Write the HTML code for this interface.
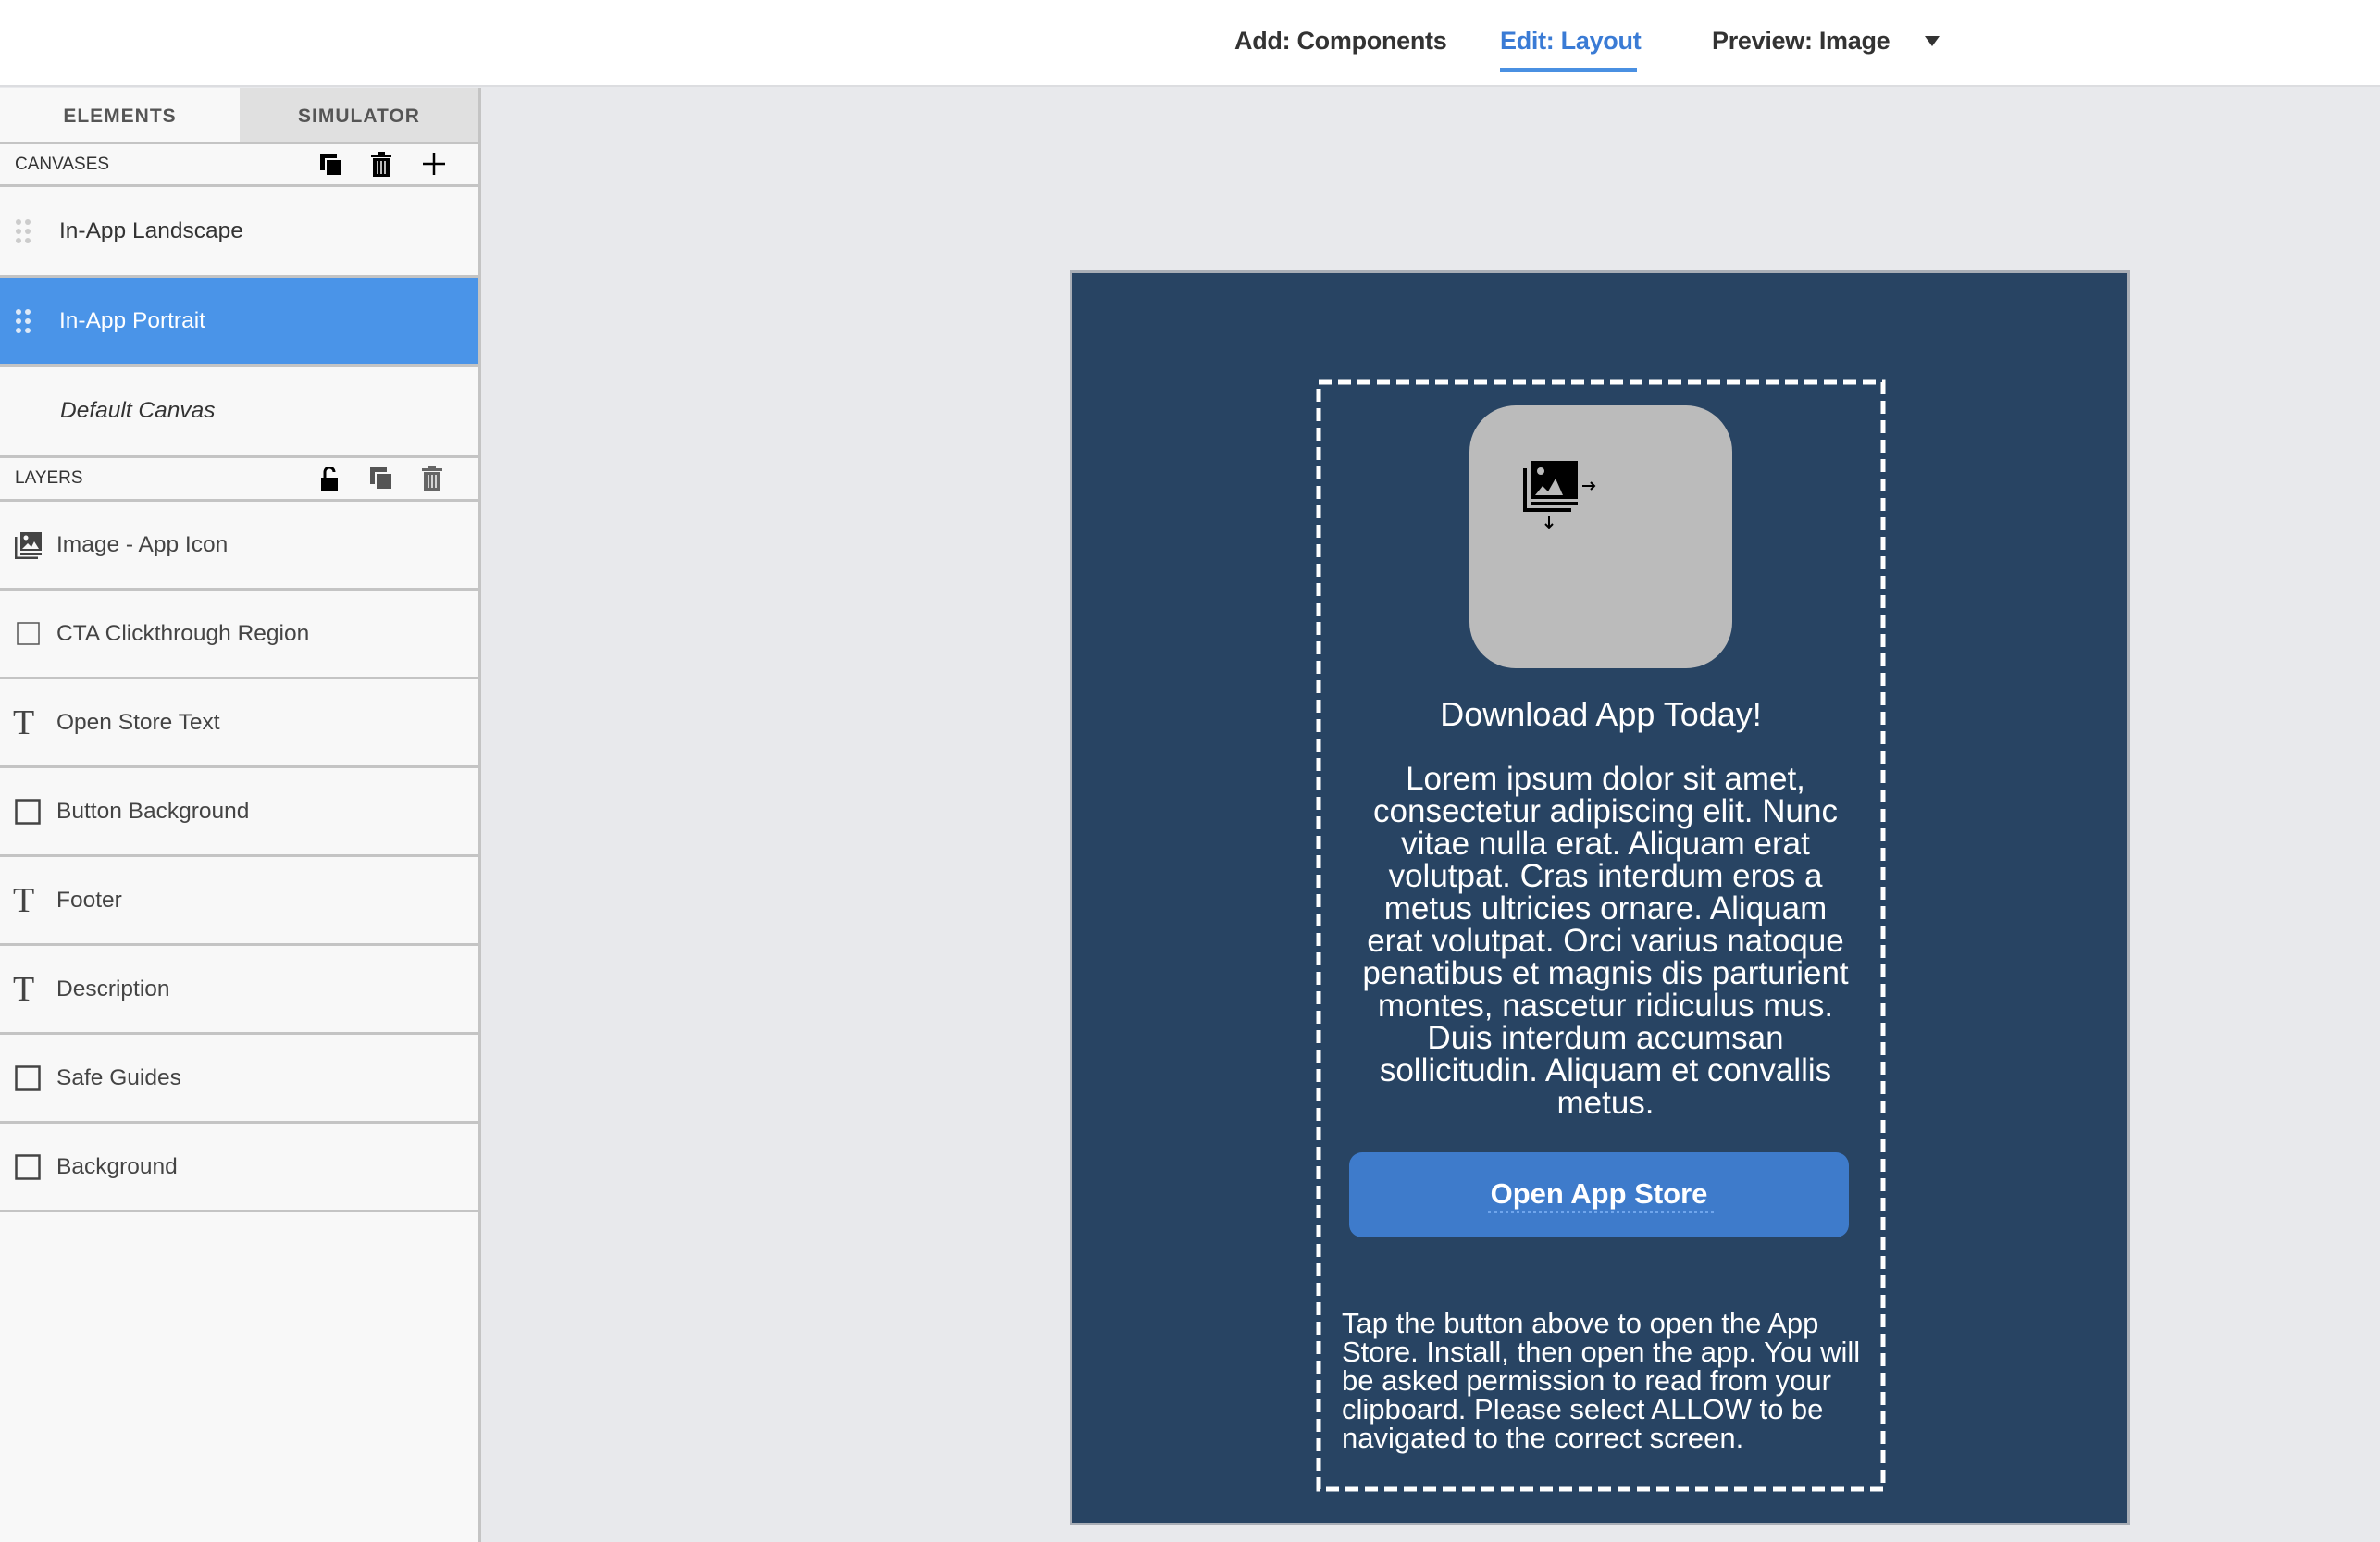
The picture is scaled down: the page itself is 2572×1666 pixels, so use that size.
<!DOCTYPE html>
<html><head><meta charset="utf-8">
<style>
*{margin:0;padding:0;box-sizing:border-box}
body{width:2572px;height:1666px;overflow:hidden;background:#e8e9ec;font-family:"Liberation Sans",sans-serif;position:relative}
.top{position:absolute;left:0;top:0;width:2572px;height:94px;background:#fff;border-bottom:2px solid #dcdde0}
.nav{position:absolute;top:29px;font-size:27px;color:#333;font-weight:bold;white-space:nowrap;letter-spacing:-0.3px}
.side{position:absolute;left:0;top:95px;width:520px;height:1571px;background:#f8f8f8;border-right:3px solid #c4c4c4}
.tab{position:absolute;top:0;height:60px;font-size:21px;font-weight:bold;color:#555;text-align:center;line-height:62px;letter-spacing:1px}
.hdr{position:absolute;left:0;width:517px;font-size:19px;color:#333;padding-left:16px;border-bottom:3px solid #c4c4c4;border-top:3px solid #c4c4c4;background:#f8f8f8}
.row{position:absolute;left:0;width:517px;border-bottom:3px solid #c4c4c4;font-size:24.5px;color:#444}
.row span{position:absolute;left:61px;top:50%;transform:translateY(-50%)}
.ic{position:absolute;left:16px;top:50%;transform:translateY(-50%)}
.phone{position:absolute;left:1156px;top:292px;width:1146px;height:1356px;background:#284463;border:3px solid #a9aeb6}
.txt{position:absolute;color:#fff;text-align:center;white-space:nowrap}
</style></head><body>
<div class="top">
 <div class="nav" style="left:1334px">Add: Components</div>
 <div class="nav" style="left:1621px;color:#3a7bd5">Edit: Layout</div>
 <div style="position:absolute;left:1621px;top:74px;width:148px;height:4px;background:#4a90e2"></div>
 <div class="nav" style="left:1850px">Preview: Image</div>
 <div style="position:absolute;left:2080px;top:39px;width:0;height:0;border-left:8px solid transparent;border-right:8px solid transparent;border-top:11px solid #333"></div>
</div>
<div class="side">
 <div class="tab" style="left:0;width:259px;background:#f8f8f8">ELEMENTS</div>
 <div class="tab" style="left:259px;width:258px;background:#e0e0e0">SIMULATOR</div>
 <div class="hdr" style="top:58px;height:49px;line-height:43px">CANVASES
  <svg style="position:absolute;left:346px;top:10px" width="26" height="26"><rect x="0" y="0" width="18" height="18" fill="#000"/><rect x="6" y="6" width="18" height="18" fill="#000" stroke="#f8f8f8" stroke-width="2"/></svg>
  <svg style="position:absolute;left:401px;top:8px" width="22" height="28"><rect x="0" y="3" width="22" height="3" fill="#000"/><rect x="7" y="0" width="8" height="3" fill="#000"/><rect x="2" y="7" width="18" height="20" fill="#000"/><path d="M7 10v14M11 10v14M15 10v14" stroke="#f8f8f8" stroke-width="1.5"/></svg>
  <svg style="position:absolute;left:456px;top:8px" width="26" height="26"><path d="M13 1v24M1 13h24" stroke="#000" stroke-width="2.5"/></svg>
 </div>
 <div class="row" style="top:107px;height:98px"><svg class="ic" width="18" height="28"><g fill="#ccc"><circle cx="4" cy="4" r="3"/><circle cx="14" cy="4" r="3"/><circle cx="4" cy="14" r="3"/><circle cx="14" cy="14" r="3"/><circle cx="4" cy="24" r="3"/><circle cx="14" cy="24" r="3"/></g></svg><span style="color:#333;left:64px">In-App Landscape</span></div>
 <div class="row" style="top:205px;height:96px;background:#4a94e8;border-bottom:3px solid #c4c4c4"><svg class="ic" width="18" height="28"><g fill="#dde9f8"><circle cx="4" cy="4" r="3"/><circle cx="14" cy="4" r="3"/><circle cx="4" cy="14" r="3"/><circle cx="14" cy="14" r="3"/><circle cx="4" cy="24" r="3"/><circle cx="14" cy="24" r="3"/></g></svg><span style="color:#fff;left:64px">In-App Portrait</span></div>
 <div class="row" style="top:301px;height:96px;border-bottom:none"><span style="font-style:italic;color:#333;left:65px">Default Canvas</span></div>
 <div class="hdr" style="top:397px;height:50px;line-height:43px">LAYERS
  <svg style="position:absolute;left:347px;top:10px" width="20" height="26"><path d="M4 11V5a5 5 0 0 1 10 0" stroke="#000" stroke-width="3" fill="none"/><rect x="0" y="11" width="18" height="14" fill="#000"/></svg>
  <svg style="position:absolute;left:400px;top:10px" width="26" height="26"><rect x="0" y="0" width="18" height="18" fill="#555"/><rect x="6" y="6" width="18" height="18" fill="#555" stroke="#f8f8f8" stroke-width="2"/></svg>
  <svg style="position:absolute;left:456px;top:8px" width="22" height="28"><rect x="0" y="3" width="22" height="3" fill="#666"/><rect x="7" y="0" width="8" height="3" fill="#666"/><rect x="2" y="7" width="18" height="20" fill="#666"/><path d="M7 10v14M11 10v14M15 10v14" stroke="#f8f8f8" stroke-width="1.5"/></svg>
 </div>
 <div class="row" style="top:447px;height:96px"><svg class="ic" width="30" height="30"><path d="M1 6v23h24" stroke="#444" stroke-width="3" fill="none"/><rect x="6" y="1" width="23" height="20" fill="#444"/><rect x="6" y="23" width="23" height="3" fill="#444"/><circle cx="12" cy="7" r="2.5" fill="#f8f8f8"/><path d="M8 19l6-6 4 4 3-6 5 8z" fill="#f8f8f8"/></svg><span>Image - App Icon</span></div>
 <div class="row" style="top:543px;height:96px"><svg class="ic" width="26" height="26" style="left:18px"><rect x="1" y="1" width="23" height="23" fill="none" stroke="#555" stroke-width="1.5"/></svg><span>CTA Clickthrough Region</span></div>
 <div class="row" style="top:639px;height:96px"><span style="left:14px;font-family:'Liberation Serif',serif;font-size:38px;color:#444">T</span><span>Open Store Text</span></div>
 <div class="row" style="top:735px;height:96px"><svg class="ic" width="28" height="28"><rect x="1.5" y="1.5" width="25" height="25" fill="none" stroke="#444" stroke-width="2.5"/></svg><span>Button Background</span></div>
 <div class="row" style="top:831px;height:96px"><span style="left:14px;font-family:'Liberation Serif',serif;font-size:38px;color:#444">T</span><span>Footer</span></div>
 <div class="row" style="top:927px;height:96px"><span style="left:14px;font-family:'Liberation Serif',serif;font-size:38px;color:#444">T</span><span>Description</span></div>
 <div class="row" style="top:1023px;height:96px"><svg class="ic" width="28" height="28"><rect x="1.5" y="1.5" width="25" height="25" fill="none" stroke="#444" stroke-width="2.5"/></svg><span>Safe Guides</span></div>
 <div class="row" style="top:1119px;height:96px"><svg class="ic" width="28" height="28"><rect x="1.5" y="1.5" width="25" height="25" fill="none" stroke="#444" stroke-width="2.5"/></svg><span>Background</span></div>
</div>
<div class="phone"></div>
<svg style="position:absolute;left:1422px;top:410px" width="618" height="1204"><rect x="3" y="3" width="610" height="1196" fill="none" stroke="#fff" stroke-width="5" stroke-dasharray="14 7"/></svg>
<div style="position:absolute;left:1588px;top:438px;width:284px;height:284px;background:#bbb;border-radius:50px"></div>
<svg style="position:absolute;left:1645px;top:495px" width="86" height="85"><path d="M3 11v45h50" stroke="#000" stroke-width="4" fill="none"/><rect x="10" y="3" width="50" height="41" fill="#000"/><rect x="10" y="47" width="50" height="4" fill="#000"/><circle cx="20" cy="14" r="4" fill="#bbb"/><path d="M14 40l8-10 6 6 8-14 8 18z" fill="#bbb"/><path d="M65 30h13M74 26l4 4-4 4M29 62v13M25 71l4 4 4-4" stroke="#000" stroke-width="2" fill="none"/></svg>
<div class="txt" style="left:1430px;width:600px;top:751px;font-size:36px">Download App Today!</div>
<div class="txt" style="left:1430px;width:610px;top:824px;font-size:35px;line-height:35px">Lorem ipsum dolor sit amet,<br>consectetur adipiscing elit. Nunc<br>vitae nulla erat. Aliquam erat<br>volutpat. Cras interdum eros a<br>metus ultricies ornare. Aliquam<br>erat volutpat. Orci varius natoque<br>penatibus et magnis dis parturient<br>montes, nascetur ridiculus mus.<br>Duis interdum accumsan<br>sollicitudin. Aliquam et convallis<br>metus.</div>
<div style="position:absolute;left:1458px;top:1245px;width:540px;height:92px;background:#3e7bcb;border-radius:14px"></div>
<div class="txt" style="left:1458px;width:540px;top:1272px;font-size:31px;font-weight:bold">Open App Store</div>
<div style="position:absolute;left:1608px;top:1308px;width:244px;border-top:3px dotted #6fa5ec"></div>
<div class="txt" style="left:1450px;top:1414px;font-size:31px;line-height:31px;text-align:left">Tap the button above to open the App<br>Store. Install, then open the app. You will<br>be asked permission to read from your<br>clipboard. Please select ALLOW to be<br>navigated to the correct screen.</div>
</body></html>
